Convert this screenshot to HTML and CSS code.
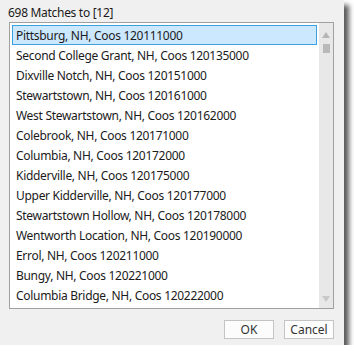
FILE: index.html
```html
<!DOCTYPE html>
<html lang="en">
<head>
    <meta charset="UTF-8">
    <title>Matches</title>
    <link rel="stylesheet" href="styles.css">
</head>
<body>
    <div class="dialog">
        <div class="caption">698 Matches to [12]</div>
        <div class="listbox">
            <ul class="items">
                <li class="selected">Pittsburg, NH, Coos 120111000</li>
                <li>Second College Grant, NH, Coos 120135000</li>
                <li>Dixville Notch, NH, Coos 120151000</li>
                <li>Stewartstown, NH, Coos 120161000</li>
                <li>West Stewartstown, NH, Coos 120162000</li>
                <li>Colebrook, NH, Coos 120171000</li>
                <li>Columbia, NH, Coos 120172000</li>
                <li>Kidderville, NH, Coos 120175000</li>
                <li>Upper Kidderville, NH, Coos 120177000</li>
                <li>Stewartstown Hollow, NH, Coos 120178000</li>
                <li>Wentworth Location, NH, Coos 120190000</li>
                <li>Errol, NH, Coos 120211000</li>
                <li>Bungy, NH, Coos 120221000</li>
                <li>Columbia Bridge, NH, Coos 120222000</li>
            </ul>
            <div class="scrollbar">
                <span class="arrow up"></span>
                <span class="thumb"></span>
                <span class="track"></span>
                <span class="arrow down"></span>
            </div>
        </div>
        <div class="buttons">
            <button class="btn">OK</button>
            <button class="btn">Cancel</button>
        </div>
    </div>
</body>
</html>
```

FILE: styles.css
```css
body {
    margin: 0;
    background-color: #fff;
    font-family: "Noto Sans", "Open Sans", sans-serif;
    font-size: 12px;
    letter-spacing: -0.3px;
    color: #1b1b1b;
}
.dialog {
    width: 344px;
    height: 345px;
    background-color: #f0f0f0;
    box-shadow: 5px 5px 5px rgba(0, 0, 0, 0.65);
    box-sizing: border-box;
    padding: 4px 10px 0 8px;
}
.caption {
    height: 18px;
    line-height: 18px;
}
.listbox {
    display: flex;
    height: 287px;
    margin-left: 1px;
    border: 1px solid #a0a0a0;
    background-color: #fff;
    box-sizing: border-box;
}
.items {
    flex: 1;
    list-style: none;
    margin: 0;
    padding: 2px 2px 0 2px;
    overflow: hidden;
}
.items li {
    height: 20px;
    line-height: 19px;
    padding-left: 3px;
    border: 1px solid transparent;
    box-sizing: border-box;
    white-space: nowrap;
}
.items li.selected {
    background-color: #cce8ff;
    border-color: #3c9fe0;
}
.scrollbar {
    width: 14px;
    background-color: #e8e8e8;
    display: flex;
    flex-direction: column;
    align-items: center;
    padding: 9px 0 6px;
}
.arrow {
    width: 0;
    height: 0;
    border-left: 4px solid transparent;
    border-right: 4px solid transparent;
}
.arrow.up {
    border-bottom: 6px solid #b5b5b5;
}
.arrow.down {
    border-top: 6px solid #c8c8c8;
}
.thumb {
    width: 7px;
    height: 9px;
    margin-top: 6px;
    background-color: #b9b9b9;
}
.track {
    flex: 1;
}
.buttons {
    display: flex;
    justify-content: flex-end;
    gap: 10px;
    margin-top: 11px;
}
.btn {
    font-family: inherit;
    font-size: 12px;
    letter-spacing: 0;
    color: #333;
    width: 50px;
    height: 19px;
    padding: 0;
    border: 1px solid #c4c4c4;
    background-color: #fcfcfc;
}
```
